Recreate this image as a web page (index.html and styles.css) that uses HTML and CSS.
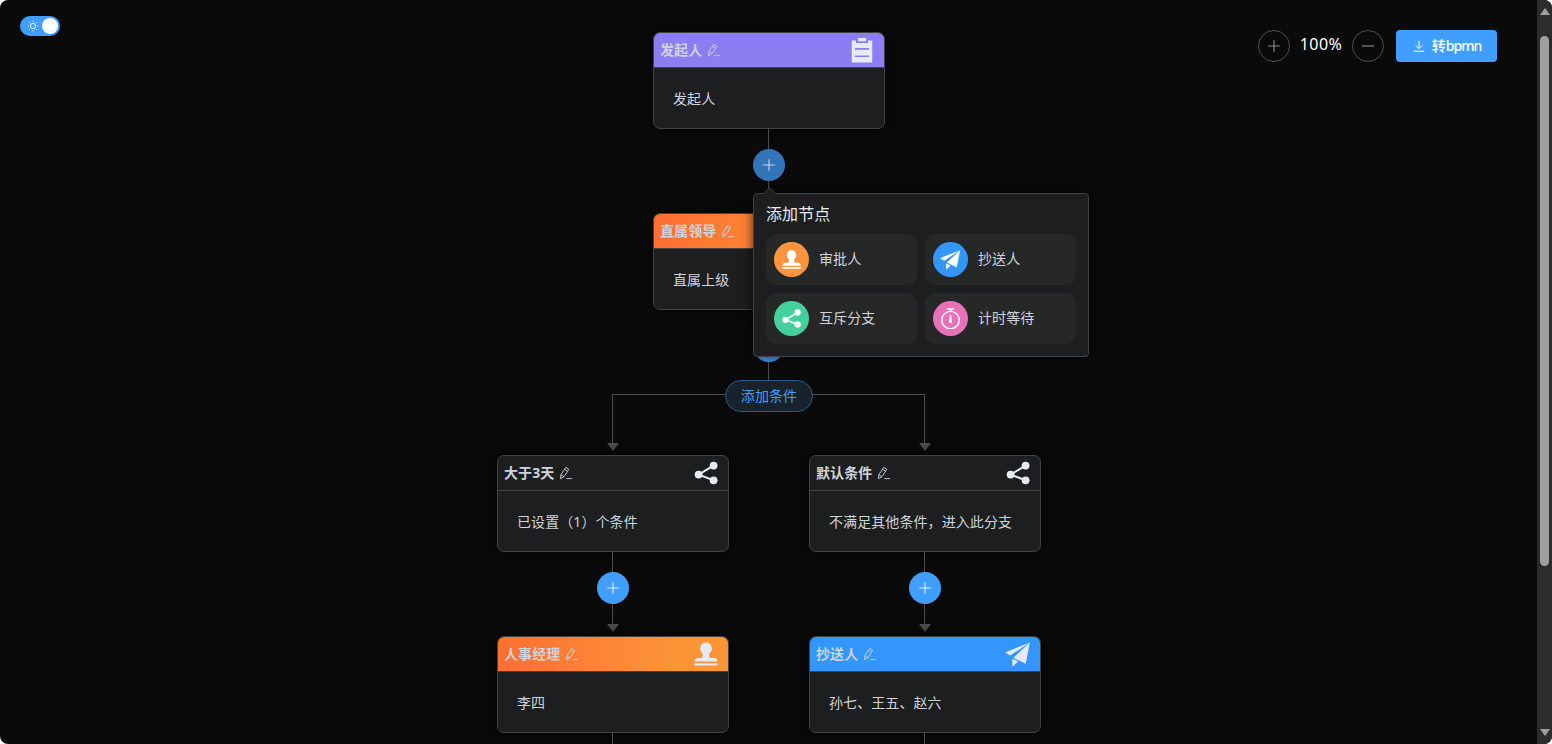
FILE: index.html
```html
<!DOCTYPE html>
<html lang="zh-CN">
<head>
<meta charset="utf-8">
<title>流程设计</title>
<link rel="stylesheet" href="styles.css">
</head>
<body>
<svg class="sprite" xmlns="http://www.w3.org/2000/svg">
  <symbol id="edit" viewBox="0 0 14 14"><path d="M1.9 8.7 6.8 1.4 9.8 3.3 5 10.7 1.4 12.7ZM5.5 3.3 8.5 5.2M1.9 8.7 5 10.7M7.4 12.6H13" fill="none" stroke="currentColor" stroke-width=".9" stroke-linejoin="round"/></symbol>
  <symbol id="plus" viewBox="0 0 14 14"><path d="M7 1.2V12.8M1.2 7H12.8" stroke="currentColor" stroke-width="1.1" fill="none"/></symbol>
  <symbol id="share" viewBox="0 0 26 26"><g fill="currentColor"><circle cx="5.6" cy="14.6" r="3.9"/><circle cx="20.6" cy="5.6" r="3.9"/><circle cx="20.6" cy="20.3" r="3.9"/></g><path d="M20.6 5.6 5.6 14.6 20.6 20.3" fill="none" stroke="currentColor" stroke-width="2"/></symbol>
  <symbol id="stamp" viewBox="0 0 26 26"><path d="M13 1.5A6 6 0 0 0 9.2 12C10.2 13 9.9 15.4 9 17H4.6Q1.6 17.4 1.5 20.6H24.5Q24.4 17.4 21.4 17H17C16.1 15.4 15.8 13 16.8 12A6 6 0 0 0 13 1.5ZM1.5 22.3H24.5V24.6H1.5Z" fill="currentColor"/></symbol>
  <symbol id="plane" viewBox="0 0 26 26"><path d="M0 11.4 24.7 1.4 5.2 14.6ZM24.9 1.6 20.7 22.7 8.3 16.8ZM7.4 17.8 13.3 20.5 7.4 25.7Z" fill="currentColor"/></symbol>
  <symbol id="clip" viewBox="0 0 26 26"><path fill-rule="evenodd" d="M2.7 3.4H7V6H19V3.4H23.3V25.4H2.7ZM9 .9H17V4.2H9ZM6 11H20V12.7H6ZM6 18.4H20V20.1H6Z" fill="currentColor"/></symbol>
  <symbol id="timer" viewBox="0 0 26 26"><g fill="none" stroke="currentColor" stroke-width="1.8"><circle cx="13" cy="15" r="10.8"/><path d="M8.5 1.3H17.5M13 1.3V5"/></g><path d="M12.3 8.5H13.7L14.7 16.4A1.8 1.8 0 1 1 11.3 16.4Z" fill="currentColor"/></symbol>
</svg>
<div class="app">
  <main class="canvas">
    <div class="switch"><svg class="sun" viewBox="0 0 12 12"><circle cx="6" cy="6" r="2.6"/><path d="M6 .6V1.7M6 10.3V11.4M.6 6H1.7M10.3 6H11.4M2.1 2.1 2.9 2.9M9.1 9.1 9.9 9.9M9.9 2.1 9.1 2.9M2.1 9.9 2.9 9.1"/></svg><span class="knob"></span></div>

    <div class="toolbar">
      <span class="round"><svg viewBox="0 0 14 14"><use href="#plus"/></svg></span>
      <span class="percent">100%</span>
      <span class="round"><svg viewBox="0 0 14 14"><path d="M1 7H13" stroke="currentColor" stroke-width="1.1"/></svg></span>
      <span class="export"><svg viewBox="0 0 14 14"><path d="M7 1.8V9.6M3.6 6.3 7 9.7 10.4 6.3M1.8 12.2H12.2" fill="none" stroke="currentColor"/></svg>转<span class="latin">bpmn</span></span>
    </div>

    <div class="flow">
      <section class="card start">
        <header class="head"><b>发起人</b><svg class="edit"><use href="#edit"/></svg><svg class="type"><use href="#clip"/></svg></header>
        <p class="body">发起人</p>
      </section>
      <div class="line gap20"></div>
      <div class="anchor">
        <span class="add active"><svg><use href="#plus"/></svg></span>
        <div class="popover">
          <h3 class="pop-title">添加节点</h3>
          <div class="options">
            <div class="option"><span class="dot orange"><svg><use href="#stamp"/></svg></span><span class="label">审批人</span></div>
            <div class="option"><span class="dot blue"><svg><use href="#plane"/></svg></span><span class="label">抄送人</span></div>
            <div class="option"><span class="dot green"><svg><use href="#share"/></svg></span><span class="label">互斥分支</span></div>
            <div class="option"><span class="dot pink"><svg><use href="#timer"/></svg></span><span class="label">计时等待</span></div>
          </div>
        </div>
      </div>
      <div class="line gap20"></div><div class="arrow"></div>
      <section class="card approve">
        <header class="head"><b>直属领导</b><svg class="edit"><use href="#edit"/></svg><svg class="type"><use href="#stamp"/></svg></header>
        <p class="body">直属上级</p>
      </section>
      <div class="line gap20"></div>
      <span class="add"><svg><use href="#plus"/></svg></span>
      <div class="line gap18"></div>
      <div class="pill">添加条件</div>
      <div class="rail"></div>
      <div class="branches">
        <div class="branch">
          <div class="line gap48"></div><div class="arrow"></div>
          <section class="card">
            <header class="head"><b>大于3天</b><svg class="edit"><use href="#edit"/></svg><svg class="type"><use href="#share"/></svg></header>
            <p class="body">已设置（1）个条件</p>
          </section>
          <div class="line gap20"></div>
          <span class="add"><svg><use href="#plus"/></svg></span>
          <div class="line gap20"></div><div class="arrow"></div>
          <section class="card approve">
            <header class="head"><b>人事经理</b><svg class="edit"><use href="#edit"/></svg><svg class="type"><use href="#stamp"/></svg></header>
            <p class="body">李四</p>
          </section>
          <div class="line gap20"></div>
        </div>
        <div class="branch">
          <div class="line gap48"></div><div class="arrow"></div>
          <section class="card">
            <header class="head"><b>默认条件</b><svg class="edit"><use href="#edit"/></svg><svg class="type"><use href="#share"/></svg></header>
            <p class="body">不满足其他条件，进入此分支</p>
          </section>
          <div class="line gap20"></div>
          <span class="add"><svg><use href="#plus"/></svg></span>
          <div class="line gap20"></div><div class="arrow"></div>
          <section class="card copy">
            <header class="head"><b>抄送人</b><svg class="edit"><use href="#edit"/></svg><svg class="type"><use href="#plane"/></svg></header>
            <p class="body">孙七、王五、赵六</p>
          </section>
          <div class="line gap20"></div>
        </div>
      </div>
    </div>
  </main>
  <aside class="scrollbar"><i class="up"></i><i class="thumb"></i><i class="down"></i></aside>
</div>
</body>
</html>
```
FILE: styles.css
```css
* { box-sizing: border-box; }
html, body { margin: 0; height: 744px; overflow: hidden; background: #fff; }
body { font: 14px/20px "Noto Sans", "Noto Sans CJK SC", sans-serif; letter-spacing: .08px; color: #cfd3dc; }
svg { display: block; flex: none; }
.sprite { position: absolute; width: 0; height: 0; }
.app { display: flex; height: 744px; border-radius: 8px; overflow: hidden; background: #0a0a0a; }
.canvas { position: relative; flex: 1; height: 744px; overflow: hidden; }

.switch { position: absolute; left: 20px; top: 16px; width: 40px; height: 20px; padding: 2px 2px 2px 7px; border-radius: 10px; background: #409eff; display: flex; align-items: center; justify-content: space-between; }
.sun { width: 12px; height: 12px; fill: none; stroke: #fff; stroke-width: .9; }
.knob { width: 16px; height: 16px; border-radius: 50%; background: #fff; }

.toolbar { position: absolute; top: 30px; right: 40px; display: flex; align-items: center; }
.round { width: 32px; height: 32px; border: 1px solid #4c4d4f; border-radius: 50%; display: flex; align-items: center; justify-content: center; color: #8d9095; }
.round svg, .export svg { width: 14px; height: 14px; }
.percent { width: 62px; padding-bottom: 4px; text-align: center; font-size: 16px; letter-spacing: .4px; color: #fff; }
.export { margin-left: 12px; width: 101px; height: 32px; border-radius: 4px; background: #409eff; color: #fff; display: flex; align-items: center; justify-content: center; font-weight: 500; }
.export svg { margin-right: 6px; }
.latin { letter-spacing: -1px; }

.flow { margin-left: 1px; padding-top: 32px; display: flex; flex-direction: column; align-items: center; }
.card { width: 232px; height: 97px; flex: none; border: 1px solid #414243; border-radius: 7px; background: #1d1e1f; overflow: hidden; box-shadow: 0 0 12px rgba(0, 0, 0, .72); }
.head { height: 35px; padding: 0 9px 0 6px; border-bottom: 1px solid #414243; display: flex; align-items: center; }
.head b { font-weight: 700; }
.edit { width: 14px; height: 14px; margin-left: 5px; }
.type { width: 26px; height: 26px; margin-left: auto; color: #e5eaf3; }
.body { margin: 0; padding: 21px 19px; white-space: nowrap; }
.start .head { background: #8c7df3; }
.approve .head { background: linear-gradient(90deg, #ff6f32, #fb9337 75%, #fb9337); }
.copy .head { background: #3296fa; }

.line { width: 2px; flex: none; border-left: 1px solid #4c4d4f; }
.gap18 { height: 18px; }
.gap20 { height: 20px; }
.gap48 { height: 48px; }
.arrow { margin-bottom: 4px; border: 6px solid transparent; border-top: 8px solid #4c4d4f; border-bottom: 0; }
.add { width: 32px; height: 32px; flex: none; border-radius: 50%; background: #409eff; color: #e2f0ff; display: flex; align-items: center; justify-content: center; }
.add svg { width: 14px; height: 14px; }
.add.active { background: #3375b9; color: #c4d8ee; }

.pill { position: relative; width: 88px; height: 32px; flex: none; border: 1px solid #2a598a; border-radius: 16px; background: #18222c; color: #409eff; line-height: 30px; text-align: center; }
.rail { width: 313px; height: 1px; margin: -18px 1px 0 0; background: #4c4d4f; }
.branches { display: grid; grid-template-columns: 312px 312px; }
.branch { display: flex; flex-direction: column; align-items: center; }

.anchor { position: relative; z-index: 5; }
.popover { position: absolute; left: 0; top: 44px; width: 336px; height: 164px; padding: 12px; border: 1px solid #414243; border-radius: 4px; background: #1d1e1f; box-shadow: 0 0 12px rgba(0, 0, 0, .72); }
.popover::before { content: ""; position: absolute; left: 10px; top: -5px; width: 10px; height: 10px; border: solid #414243; border-width: 1px 0 0 1px; border-top-left-radius: 2px; background: #1d1e1f; transform: rotate(45deg); clip-path: polygon(0 0, 100% 0, 0 100%); }
.pop-title { margin: -3px 0 7px; height: 24px; font-size: 16px; line-height: 22px; font-weight: 400; color: #e5eaf3; }
.options { display: grid; grid-template-columns: 151px 151px; gap: 8px; }
.option { height: 51px; padding: 8px; border-radius: 10px; background: #262727; display: flex; align-items: center; gap: 10px; }
.label { padding-bottom: 2px; }
.dot { width: 35px; height: 35px; border-radius: 50%; color: #fff; display: flex; align-items: center; justify-content: center; }
.dot svg { width: 21px; height: 21px; }
.orange { background: #ff943e; }
.blue { background: #3296fa; }
.green { background: #45cf9b; }
.pink { background: #e872b7; }

.scrollbar { width: 15px; background: #2c2c2c; display: flex; flex-direction: column; align-items: center; padding: 8px 0 8px; }
.up { border: 5px solid transparent; border-bottom: 7px solid #9f9f9f; border-top: 0; }
.thumb { width: 9px; height: 530px; margin-top: 21px; border-radius: 5px; background: #9f9f9f; }
.down { margin-top: auto; border: 5px solid transparent; border-top: 7px solid #9f9f9f; border-bottom: 0; }
```
